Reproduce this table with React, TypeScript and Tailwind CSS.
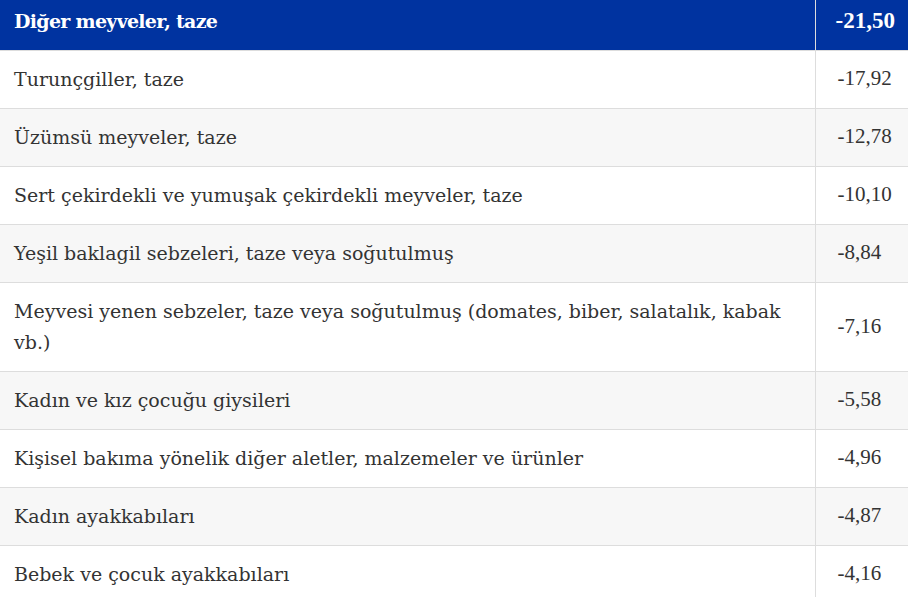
const ROWS: [string, string][] = [
  ["Turunçgiller, taze", "-17,92"],
  ["Üzümsü meyveler, taze", "-12,78"],
  ["Sert çekirdekli ve yumuşak çekirdekli meyveler, taze", "-10,10"],
  ["Yeşil baklagil sebzeleri, taze veya soğutulmuş", "-8,84"],
  [
    "Meyvesi yenen sebzeler, taze veya soğutulmuş (domates, biber, salatalık, kabak vb.)",
    "-7,16",
  ],
  ["Kadın ve kız çocuğu giysileri", "-5,58"],
  ["Kişisel bakıma yönelik diğer aletler, malzemeler ve ürünler", "-4,96"],
  ["Kadın ayakkabıları", "-4,87"],
  ["Bebek ve çocuk ayakkabıları", "-4,16"],
];

export default function App() {
  return (
    <main className="min-h-screen bg-white font-['DejaVu_Serif',serif] text-[#333]">
      <table className="w-full border-collapse">
        <thead>
          <tr className="bg-[#0033a0] text-white">
            <th className="h-[50px] px-[14px] pb-[8px] text-left text-[19px] font-bold leading-[32px] tracking-[-0.7px]">
              Diğer meyveler, taze
            </th>
            <th className="w-[93px] border-l border-[#dddddd] pl-[20px] pb-[8px] text-left font-['Liberation_Serif',serif] text-[23px] font-bold">
              -21,50
            </th>
          </tr>
        </thead>
        <tbody>
          {ROWS.map(([label, value], i) => (
            <tr
              key={label}
              className={
                i % 2 === 1
                  ? "border-t border-[#dddddd] bg-[#f7f7f7]"
                  : "border-t border-[#dddddd] bg-white"
              }
            >
              <td className="px-[14px] py-[13px] text-[19px] leading-[31px]">
                {label}
              </td>
              <td className="border-l border-[#dddddd] pl-[22px] font-['Liberation_Serif',serif] text-[21px]">
                {value}
              </td>
            </tr>
          ))}
        </tbody>
      </table>
    </main>
  );
}
